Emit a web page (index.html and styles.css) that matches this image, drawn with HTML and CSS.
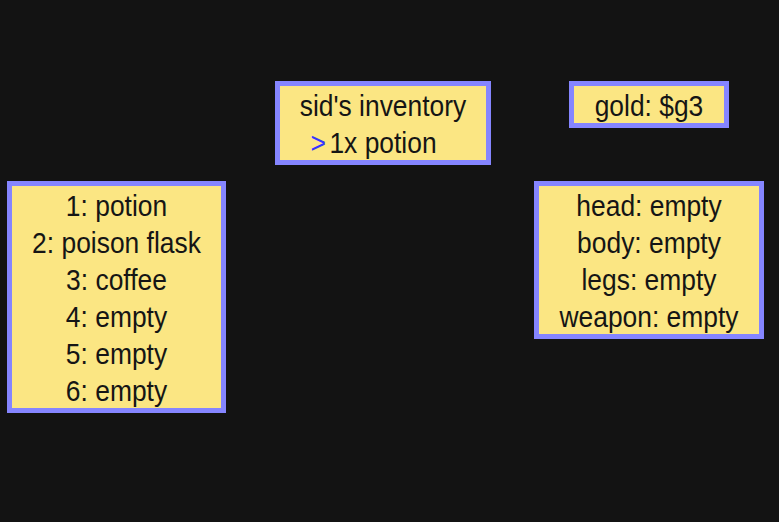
FILE: index.html
```html
<!DOCTYPE html>
<html lang="en">
<head>
  <meta charset="UTF-8">
  <title>Inventory</title>
  <link rel="stylesheet" href="styles.css">
</head>
<body>
  <div class="screen">

    <div class="panel inventory">
      <span class="line">sid's inventory</span>
      <span class="line"><span class="item"><span class="cursor">&gt;</span>1x potion</span></span>
    </div>

    <div class="panel gold">
      <span class="line">gold: $g3</span>
    </div>

    <div class="panel slots">
      <span class="line">1: potion</span>
      <span class="line">2: poison flask</span>
      <span class="line">3: coffee</span>
      <span class="line">4: empty</span>
      <span class="line">5: empty</span>
      <span class="line">6: empty</span>
    </div>

    <div class="panel equip">
      <span class="line">head: empty</span>
      <span class="line">body: empty</span>
      <span class="line">legs: empty</span>
      <span class="line">weapon: empty</span>
    </div>

  </div>
</body>
</html>
```

FILE: styles.css
```css
body {
  margin: 0;
  background: #131313;
  font-family: "Liberation Sans", Arial, sans-serif;
}
.screen {
  position: relative;
  width: 779px;
  height: 522px;
  overflow: hidden;
}
.panel {
  position: absolute;
  box-sizing: border-box;
  padding-top: 1px;
  background: #fbe683;
  border: 5px solid #8585ff;
  color: #151515;
  font-size: 30px;
  line-height: 37px;
  text-align: center;
}
.line {
  display: block;
  white-space: nowrap;
  transform: scaleX(0.88);
}
.item {
  position: relative;
}
.cursor {
  position: absolute;
  right: 100%;
  margin-right: 4px;
  color: #3535ff;
}
.inventory {
  left: 275px;
  top: 81px;
  width: 216px;
  height: 84px;
}
.gold {
  left: 569px;
  top: 81px;
  width: 160px;
  height: 47px;
}
.slots {
  left: 7px;
  top: 181px;
  width: 219px;
  height: 232px;
}
.equip {
  left: 534px;
  top: 181px;
  width: 230px;
  height: 158px;
}
```
